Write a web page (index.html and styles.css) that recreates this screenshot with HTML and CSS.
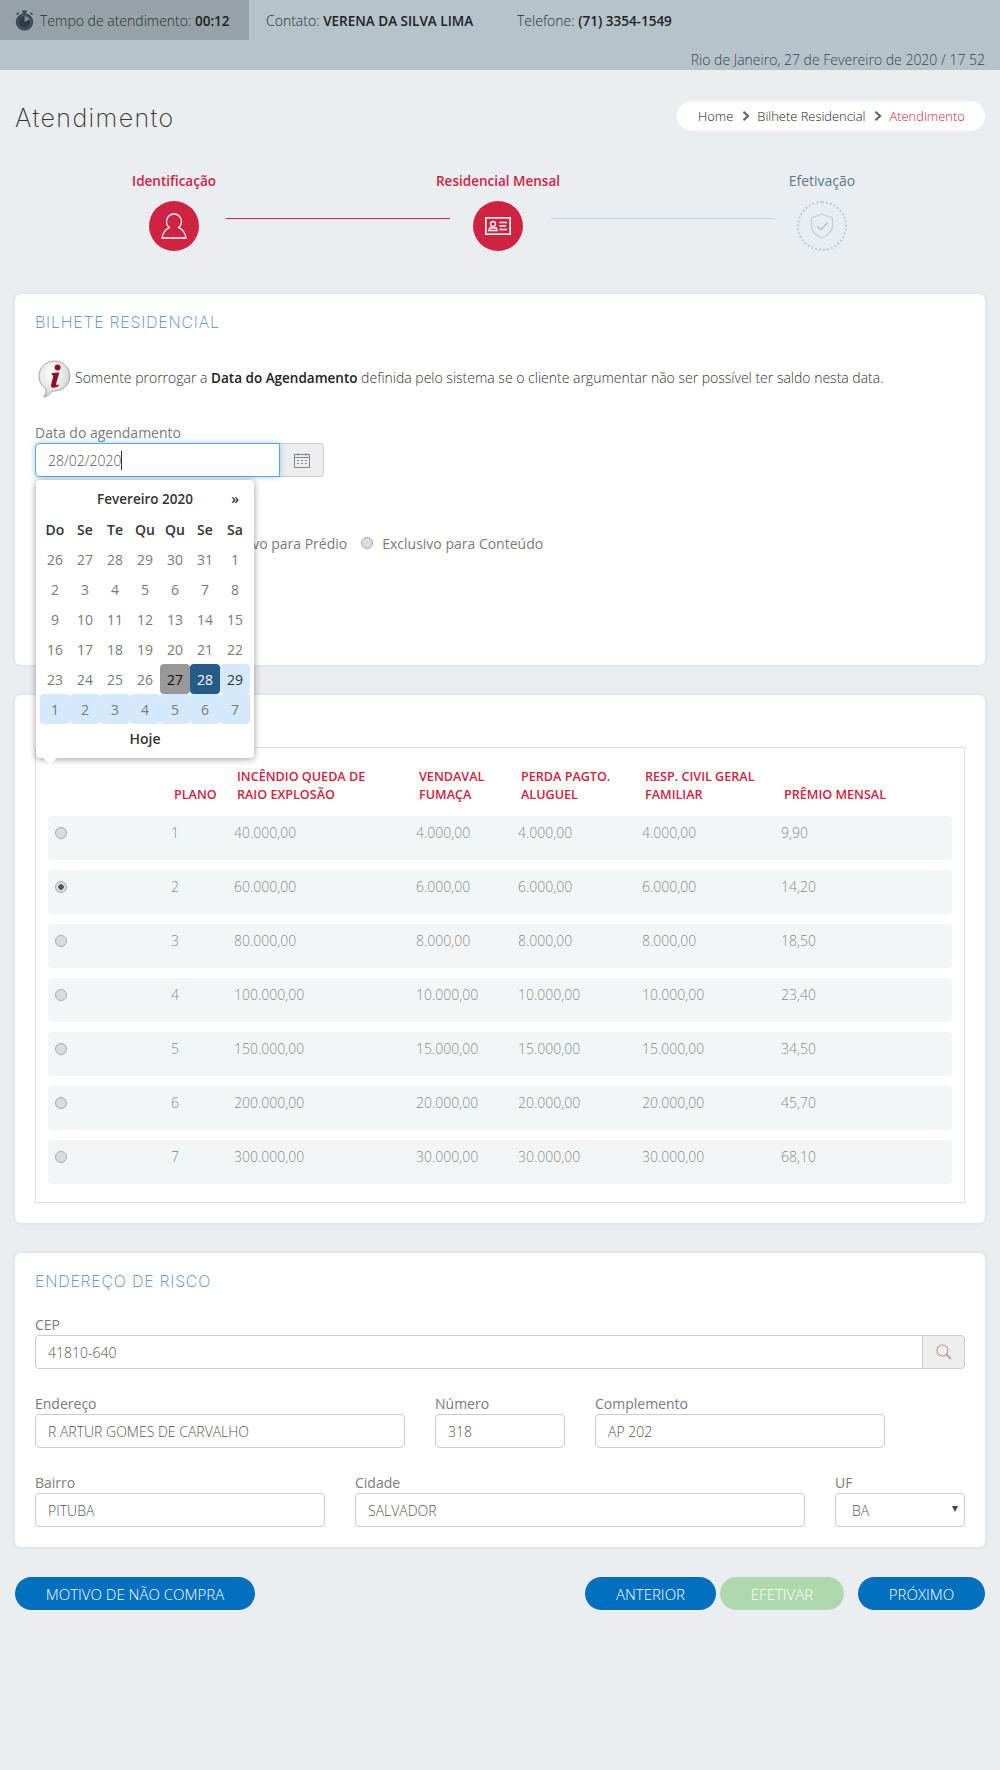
FILE: index.html
```html
<!DOCTYPE html>
<html lang="pt-BR">
<head>
  <meta charset="UTF-8" />
  <meta name="viewport" content="width=device-width, initial-scale=1.0"/>
  <title>Atendimento</title>
  <link rel="stylesheet" href="styles.css">
</head>
<body>
  <!-- Top bar -->
  <header class="topbar">
    <div class="topbar-row">
      <div class="timer">
        <svg class="timer-icon" viewBox="0 0 20 22" width="19" height="21">
          <rect x="7.5" y="0.5" width="5" height="2" fill="#33414a"/>
          <rect x="9" y="2" width="2" height="2" fill="#33414a"/>
          <rect x="1.2" y="3" width="3" height="1.6" transform="rotate(-40 2.7 3.8)" fill="#33414a"/>
          <rect x="15.8" y="3" width="3" height="1.6" transform="rotate(40 17.3 3.8)" fill="#33414a"/>
          <circle cx="10" cy="12.5" r="8.6" fill="#2e3c45" stroke="#33414a" stroke-width="1"/>
          <circle cx="10" cy="12.5" r="7" fill="none" stroke="#7f8c93" stroke-width="0.6"/>
          <path d="M10 12.5 L10 6.4 A6.1 6.1 0 0 1 15.6 10 Z" fill="#7f8c93"/>
        </svg>
        <span>Tempo de atendimento: <b>00:12</b></span>
      </div>
      <div class="contact">Contato: <b>VERENA DA SILVA LIMA</b></div>
      <div class="phone">Telefone: <b>(71) 3354-1549</b></div>
    </div>
    <div class="topbar-date">Rio de Janeiro, 27 de Fevereiro de 2020 / 17 52</div>
  </header>

  <main class="page">
    <div class="title-row">
      <h1 class="page-title">Atendimento</h1>
      <nav class="breadcrumb">
        <span>Home</span>
        <svg class="crumb-arrow" viewBox="0 0 8 10" width="8" height="10"><path d="M1.5 0.8 L6 5 L1.5 9.2" fill="none" stroke="#666" stroke-width="2.2"/></svg>
        <span>Bilhete Residencial</span>
        <svg class="crumb-arrow" viewBox="0 0 8 10" width="8" height="10"><path d="M1.5 0.8 L6 5 L1.5 9.2" fill="none" stroke="#666" stroke-width="2.2"/></svg>
        <span class="crumb-current">Atendimento</span>
      </nav>
    </div>

    <!-- Steps -->
    <div class="stepper">
      <div class="step step-done">
        <span class="step-label">Identificação</span>
        <span class="step-circle">
          <svg viewBox="0 0 26 26" width="26" height="26" fill="none" stroke="#fff" stroke-width="1.3">
            <path d="M13 1 C8.6 1 5.5 4.3 5.5 8.5 C5.5 11 6.6 13.2 8.3 14.6 C4.6 16.2 1.8 20 1 25 L25 25 C24.2 20 21.4 16.2 17.7 14.6 C19.4 13.2 20.5 11 20.5 8.5 C20.5 4.3 17.4 1 13 1 Z"/>
          </svg>
        </span>
      </div>
      <span class="step-line step-line-done"></span>
      <div class="step step-done">
        <span class="step-label">Residencial Mensal</span>
        <span class="step-circle">
          <svg viewBox="0 0 26 18" width="26" height="18" fill="none" stroke="#fff">
            <rect x="0.8" y="0.8" width="24.4" height="16.4" stroke-width="1.6"/>
            <circle cx="8" cy="7" r="2.5" stroke-width="1.3"/>
            <path d="M3.8 13.5 L4.6 11 L11.4 11 L12.2 13.5 Z" stroke-width="1.3"/>
            <path d="M14.5 5.5 H22 M14.5 9 H21 M14.5 12.5 H22" stroke-width="1.4"/>
          </svg>
        </span>
      </div>
      <span class="step-line"></span>
      <div class="step step-todo">
        <span class="step-label">Efetivação</span>
        <span class="step-circle">
          <svg viewBox="0 0 24 26" width="24" height="26" fill="none" stroke="#c5ced8" stroke-width="1.3">
            <path d="M12 1 L22.5 5 L22.5 13 C22.5 18.5 17.5 22.5 12 25 C6.5 22.5 1.5 18.5 1.5 13 L1.5 5 Z"/>
            <path d="M7 13 L10.8 16.8 L17.5 9.5" stroke="#b4bfca"/>
          </svg>
        </span>
      </div>
    </div>

    <!-- Bilhete -->
    <section class="card card-bilhete">
      <h2 class="card-title">BILHETE RESIDENCIAL</h2>
      <div class="notice">
        <svg class="notice-icon" viewBox="0 0 33 38" width="33" height="38">
          <defs>
            <radialGradient id="bubble" cx="0.4" cy="0.35" r="0.75">
              <stop offset="0" stop-color="#ffffff"/>
              <stop offset="0.6" stop-color="#e4e4e4"/>
              <stop offset="1" stop-color="#b5b5b5"/>
            </radialGradient>
          </defs>
          <path d="M16.5 1 C25 1 32 7.6 32 16 C32 24.4 25 31 16.5 31 L14 31 C12.5 34 9.5 36.5 5.5 37 C7.5 34.5 8.2 32 8 29 C3.6 26.2 1 21.4 1 16 C1 7.6 8 1 16.5 1 Z" fill="url(#bubble)" stroke="#a8a8a8"/>
          <circle cx="19.6" cy="7.4" r="3" fill="#8f1024"/>
          <path d="M14 13 L21.4 12.4 L18 24 C17.7 25.2 18.5 25.4 20.6 24.2 L20.6 26 C17 28.2 12.4 28.6 13 25.2 L15.4 15.4 L13.6 15 Z" fill="#8f1024"/>
        </svg>
        <p>Somente prorrogar a <b>Data do Agendamento</b> definida pelo sistema se o cliente argumentar não ser possível ter saldo nesta data.</p>
      </div>

      <div class="date-field">
        <label class="field-label" for="agendamento">Data do agendamento</label>
        <div class="input-group date-group">
          <input class="text-input input-focus" id="agendamento" type="text" value="28/02/2020">
          <span class="addon">
            <svg viewBox="0 0 16 15" width="16" height="15" fill="none" stroke="#7f8a90">
              <rect x="0.5" y="1.5" width="15" height="13"/>
              <path d="M0.5 4.5 H15.5 M4 0 V2.5 M12 0 V2.5"/>
              <path d="M3 7.5 H5 M7 7.5 H9 M11 7.5 H13 M3 10.5 H5 M7 10.5 H9 M11 10.5 H13"/>
            </svg>
          </span>
          <span class="caret"></span>
        </div>

        <!-- Datepicker open over the page -->
        <div class="calendar">
          <div class="cal-head">
            <span class="cal-month">Fevereiro 2020</span>
            <span class="cal-next">»</span>
          </div>
          <div class="cal-grid">
            <span class="cal-dow">Do</span><span class="cal-dow">Se</span><span class="cal-dow">Te</span><span class="cal-dow">Qu</span><span class="cal-dow">Qu</span><span class="cal-dow">Se</span><span class="cal-dow">Sa</span>
            <span>26</span><span>27</span><span>28</span><span>29</span><span>30</span><span>31</span><span>1</span>
            <span>2</span><span>3</span><span>4</span><span>5</span><span>6</span><span>7</span><span>8</span>
            <span>9</span><span>10</span><span>11</span><span>12</span><span>13</span><span>14</span><span>15</span>
            <span>16</span><span>17</span><span>18</span><span>19</span><span>20</span><span>21</span><span>22</span>
            <span>23</span><span>24</span><span>25</span><span>26</span><span class="cal-today">27</span><span class="cal-active">28</span><span class="cal-range">29</span>
            <span class="cal-range cal-muted">1</span><span class="cal-range cal-muted">2</span><span class="cal-range cal-muted">3</span><span class="cal-range cal-muted">4</span><span class="cal-range cal-muted">5</span><span class="cal-range cal-muted">6</span><span class="cal-range cal-muted">7</span>
          </div>
          <div class="cal-foot">Hoje</div>
        </div>
      </div>

      <div class="radio-row">
        <label class="radio-item radio-predio"><input class="radio" type="radio" disabled>Exclusivo para Prédio</label>
        <label class="radio-item"><input class="radio" type="radio" disabled>Exclusivo para Conteúdo</label>
      </div>
    </section>

    <!-- Planos -->
    <section class="card card-planos">
      <div class="plan-box">
        <div class="plan-head plan-cols">
          <span></span>
          <span>PLANO</span>
          <span>INCÊNDIO QUEDA DE<br>RAIO EXPLOSÃO</span>
          <span>VENDAVAL FUMAÇA</span>
          <span>PERDA PAGTO. ALUGUEL</span>
          <span>RESP. CIVIL GERAL FAMILIAR</span>
          <span>PRÊMIO MENSAL</span>
        </div>
        <div class="plan-row plan-cols"><input class="radio" type="radio" name="plano" disabled><span>1</span><span>40.000,00</span><span>4.000,00</span><span>4.000,00</span><span>4.000,00</span><span>9,90</span></div>
        <div class="plan-row plan-cols"><input class="radio" type="radio" name="plano" disabled checked><span>2</span><span>60.000,00</span><span>6.000,00</span><span>6.000,00</span><span>6.000,00</span><span>14,20</span></div>
        <div class="plan-row plan-cols"><input class="radio" type="radio" name="plano" disabled><span>3</span><span>80.000,00</span><span>8.000,00</span><span>8.000,00</span><span>8.000,00</span><span>18,50</span></div>
        <div class="plan-row plan-cols"><input class="radio" type="radio" name="plano" disabled><span>4</span><span>100.000,00</span><span>10.000,00</span><span>10.000,00</span><span>10.000,00</span><span>23,40</span></div>
        <div class="plan-row plan-cols"><input class="radio" type="radio" name="plano" disabled><span>5</span><span>150.000,00</span><span>15.000,00</span><span>15.000,00</span><span>15.000,00</span><span>34,50</span></div>
        <div class="plan-row plan-cols"><input class="radio" type="radio" name="plano" disabled><span>6</span><span>200.000,00</span><span>20.000,00</span><span>20.000,00</span><span>20.000,00</span><span>45,70</span></div>
        <div class="plan-row plan-cols"><input class="radio" type="radio" name="plano" disabled><span>7</span><span>300.000,00</span><span>30.000,00</span><span>30.000,00</span><span>30.000,00</span><span>68,10</span></div>
      </div>
    </section>

    <!-- Endereco -->
    <section class="card card-endereco">
      <h2 class="card-title">ENDEREÇO DE RISCO</h2>
      <div class="form-grid">
        <div class="field span-12">
          <label class="field-label" for="cep">CEP</label>
          <div class="input-group">
            <input class="text-input" id="cep" type="text" value="41810-640">
            <span class="addon addon-search">
              <svg viewBox="0 0 16 16" width="16" height="16" fill="none">
                <circle cx="6.5" cy="6.5" r="5.5" stroke="#d08a8a" stroke-width="1.1"/>
                <path d="M10.5 10.5 L15 15" stroke="#c9a0a0" stroke-width="2"/>
              </svg>
            </span>
          </div>
        </div>
        <div class="field span-5">
          <label class="field-label" for="endereco">Endereço</label>
          <input class="text-input" id="endereco" type="text" value="R ARTUR GOMES DE CARVALHO">
        </div>
        <div class="field span-2">
          <label class="field-label" for="numero">Número</label>
          <input class="text-input" id="numero" type="text" value="318">
        </div>
        <div class="field span-4">
          <label class="field-label" for="complemento">Complemento</label>
          <input class="text-input" id="complemento" type="text" value="AP 202">
        </div>
        <div class="field span-4">
          <label class="field-label" for="bairro">Bairro</label>
          <input class="text-input" id="bairro" type="text" value="PITUBA">
        </div>
        <div class="field span-6">
          <label class="field-label" for="cidade">Cidade</label>
          <input class="text-input" id="cidade" type="text" value="SALVADOR">
        </div>
        <div class="field span-2">
          <label class="field-label" for="uf">UF</label>
          <div class="select-wrap">
            <select class="text-input select-input" id="uf"><option>BA</option></select>
          </div>
        </div>
      </div>
    </section>

    <div class="actions">
      <button type="button" class="btn btn-motivo">MOTIVO DE NÃO COMPRA</button>
      <div class="actions-right">
        <button type="button" class="btn btn-anterior">ANTERIOR</button>
        <button type="button" class="btn btn-efetivar">EFETIVAR</button>
        <button type="button" class="btn btn-proximo">PRÓXIMO</button>
      </div>
    </div>
  </main>
</body>
</html>
```

FILE: styles.css
```css
* {
  box-sizing: border-box;
}

body {
  margin: 0;
  min-height: 1770px;
  font-family: "Open Sans", sans-serif;
  font-size: 14px;
  color: #333;
  background-color: #ebeef1;
}

b {
  font-size: 13.5px;
  font-weight: 600;
}

/* top bar */
.topbar {
  height: 70px;
  font-weight: 300;
  background-color: #b6c3cb;
  color: #2a3035;
}

.topbar-row {
  display: flex;
  height: 40px;
  align-items: center;
}

.topbar-row b {
  color: #1d2226;
}

.timer {
  display: flex;
  align-items: center;
  gap: 6px;
  width: 249px;
  height: 40px;
  padding-left: 15px;
  background-color: #96a2a7;
}

.contact {
  margin-left: 17px;
  width: 251px;
}

.topbar-date {
  padding: 10px 15px 0 0;
  text-align: right;
  line-height: 20px;
  color: #3a4349;
}

/* title row */
.page {
  padding: 31px 15px 0;
}

.title-row {
  display: flex;
  justify-content: space-between;
  align-items: center;
  height: 30px;
}

.page-title {
  margin: 4px 0 0;
  font-family: Inter, sans-serif;
  font-size: 25px;
  font-weight: 200;
  letter-spacing: 1.4px;
  color: #333;
}

.breadcrumb {
  display: flex;
  align-items: center;
  width: 308px;
  height: 30px;
  padding-left: 21px;
  font-size: 12.9px;
  font-weight: 300;
  color: #222;
  background: #fff;
  border-radius: 15px;
}

.crumb-arrow {
  margin: 0 7px 0 9px;
}

.crumb-current {
  color: #cf2341;
}

/* steps */
.stepper {
  display: flex;
  padding: 40px 0 0 134px;
  height: 163px;
}

.step {
  display: flex;
  flex-direction: column;
  align-items: center;
  width: 50px;
}

.step-label {
  white-space: nowrap;
  line-height: 20px;
  margin-bottom: 10px;
}

.step-done .step-label {
  font-size: 13.5px;
  font-weight: 600;
  color: #cf2341;
}

.step-todo .step-label {
  color: #5f7692;
}

.step-circle {
  display: flex;
  flex: none;
  align-items: center;
  justify-content: center;
  width: 50px;
  height: 50px;
  border-radius: 50%;
  background-color: #cf2341;
}

.step-todo .step-circle {
  background: none;
  border: 2px dotted #c0c8d2;
}

.step-line {
  width: 224px;
  height: 1px;
  margin: 47px 22px 0 28px;
  background-color: #c9d0d6;
}

.step-line-done {
  margin: 47px 23px 0 27px;
  background-color: #cf2341;
}

/* cards */
.card {
  padding: 15px 20px 0 20px;
  margin-bottom: 30px;
  background: #fff;
  border-radius: 6px;
  box-shadow: 0 0 4px rgba(0, 0, 0, 0.08);
}

.card-bilhete {
  height: 371px;
}

.card-planos {
  height: 528px;
  padding-top: 52px;
}

.card-endereco {
  height: 294px;
}

.card-title {
  margin: 0;
  font-family: Inter, sans-serif;
  font-size: 16px;
  font-weight: 200;
  letter-spacing: 0.75px;
  line-height: 26px;
  color: #4f86cc;
}

.notice {
  display: flex;
  align-items: center;
  gap: 4px;
  margin: 25px 0 0 3px;
}

.notice p {
  margin: 0 0 4px;
  font-weight: 300;
  color: #333;
}

.notice p b {
  color: #222;
}

.field-label {
  display: block;
  line-height: 20px;
  color: #7a7a7a;
}

.date-field {
  position: relative;
  margin-top: 25px;
}

.input-group {
  position: relative;
  display: flex;
}

.date-group {
  width: 289px;
}

.text-input {
  width: 100%;
  height: 34px;
  padding: 1px 12px 0;
  font-family: "Open Sans", sans-serif;
  font-size: 14px;
  font-weight: 300;
  color: #555;
  background: #fff;
  border: 1px solid #ccc;
  border-radius: 4px;
  outline: none;
}

.input-group .text-input {
  border-radius: 4px 0 0 4px;
}

.input-focus {
  position: relative;
  z-index: 1;
  border-color: #5ba6e0;
  box-shadow: 0 0 6px rgba(102, 175, 233, 0.6);
}

.addon {
  display: flex;
  flex: none;
  align-items: center;
  justify-content: center;
  width: 45px;
  margin-left: -1px;
  background-color: #eee;
  border: 1px solid #ccc;
  border-radius: 0 4px 4px 0;
}

.addon-search {
  width: 43px;
}

.caret {
  position: absolute;
  z-index: 2;
  left: 86px;
  top: 8px;
  width: 1px;
  height: 19px;
  background-color: #333;
}

/* datepicker */
.calendar {
  position: absolute;
  z-index: 10;
  left: 1px;
  top: 57px;
  width: 218px;
  height: 278px;
  padding: 0 4px;
  background: #fff;
  border-radius: 4px;
  box-shadow: 0 1px 7px rgba(0, 0, 0, 0.4);
}

.calendar::after {
  content: "";
  position: absolute;
  left: 7px;
  bottom: -6px;
  border-left: 7px solid transparent;
  border-right: 7px solid transparent;
  border-top: 6px solid #fff;
}

.cal-head {
  position: relative;
  height: 34px;
  line-height: 38px;
  text-align: center;
  font-weight: 600;
  font-size: 13.5px;
  color: #333;
}

.cal-next {
  position: absolute;
  right: 11px;
  font-size: 14px;
}

.cal-grid {
  display: grid;
  grid-template-columns: repeat(7, 30px);
  grid-auto-rows: 30px;
}

.cal-grid span {
  display: flex;
  align-items: center;
  justify-content: center;
  font-size: 14px;
  color: #7a7a7a;
  border-radius: 4px;
}

.cal-grid .cal-dow {
  font-weight: 600;
  color: #333;
}

.cal-grid .cal-today {
  color: #111;
  background-color: #999;
}

.cal-grid .cal-active {
  color: #fff;
  background-color: #265a88;
}

.cal-grid .cal-range {
  color: #333;
  background-color: #d4e9fc;
}

.cal-grid .cal-muted {
  color: #7a7a7a;
}

.cal-foot {
  line-height: 30px;
  text-align: center;
  font-weight: 600;
  color: #333;
}

/* radios */
.radio {
  appearance: none;
  flex: none;
  width: 12px;
  height: 12px;
  margin: 0;
  background-color: #dcdcdc;
  border: 1px solid #aaa;
  border-radius: 50%;
}

.radio:checked {
  background: radial-gradient(circle, #555 0 2.5px, #dcdcdc 3px);
}

.radio-row {
  display: flex;
  height: 20px;
  margin-top: 56px;
  padding-left: 152px;
}

.radio-item {
  display: flex;
  align-items: center;
  gap: 9px;
  color: #7a7a7a;
}

.radio-predio {
  margin-right: 14px;
}

/* plan table */
.plan-box {
  height: 456px;
  padding: 0 12px;
  border: 1px solid #ddd;
}

.plan-cols {
  display: grid;
  grid-template-columns: 123px 63px 182px 102px 124px 139px 1fr;
}

.plan-head {
  height: 68px;
  align-items: end;
  padding-bottom: 12px;
  font-size: 12.6px;
  font-weight: 600;
  line-height: 18px;
  color: #d0213f;
}

.plan-head span {
  padding-left: 3px;
  padding-right: 8px;
}

.plan-row {
  height: 44px;
  margin-bottom: 10px;
  padding-top: 7px;
  font-weight: 300;
  line-height: 20px;
  color: #8a8a8a;
  background-color: #f3f6f7;
  border-radius: 3px;
}

.plan-row .radio {
  margin: 4px 0 0 7px;
}

/* address form */
.form-grid {
  display: grid;
  grid-template-columns: repeat(12, 50px);
  column-gap: 30px;
  row-gap: 25px;
  margin-top: 21px;
}

.span-12 { grid-column: span 12; }
.span-6 { grid-column: span 6; }
.span-5 { grid-column: span 5; }
.span-4 { grid-column: span 4; }
.span-2 { grid-column: span 2; }

.select-wrap {
  position: relative;
}

.select-input {
  appearance: none;
  padding-left: 16px;
}

.select-wrap::after {
  content: "";
  position: absolute;
  right: 7px;
  top: 13px;
  border-left: 3px solid transparent;
  border-right: 3px solid transparent;
  border-top: 6px solid #444;
}

/* bottom buttons */
.actions {
  display: flex;
  justify-content: space-between;
}

.actions-right {
  display: flex;
}

.btn {
  height: 33px;
  padding: 0;
  font-family: "Open Sans", sans-serif;
  font-size: 15px;
  font-weight: 300;
  color: #fff;
  background-color: #006fbd;
  border: none;
  border-radius: 17px;
}

.btn-motivo { width: 240px; }
.btn-anterior { width: 131px; }
.btn-efetivar { width: 124px; margin: 0 14px 0 4px; background-color: #afd8ae; }
.btn-proximo { width: 127px; }
```
